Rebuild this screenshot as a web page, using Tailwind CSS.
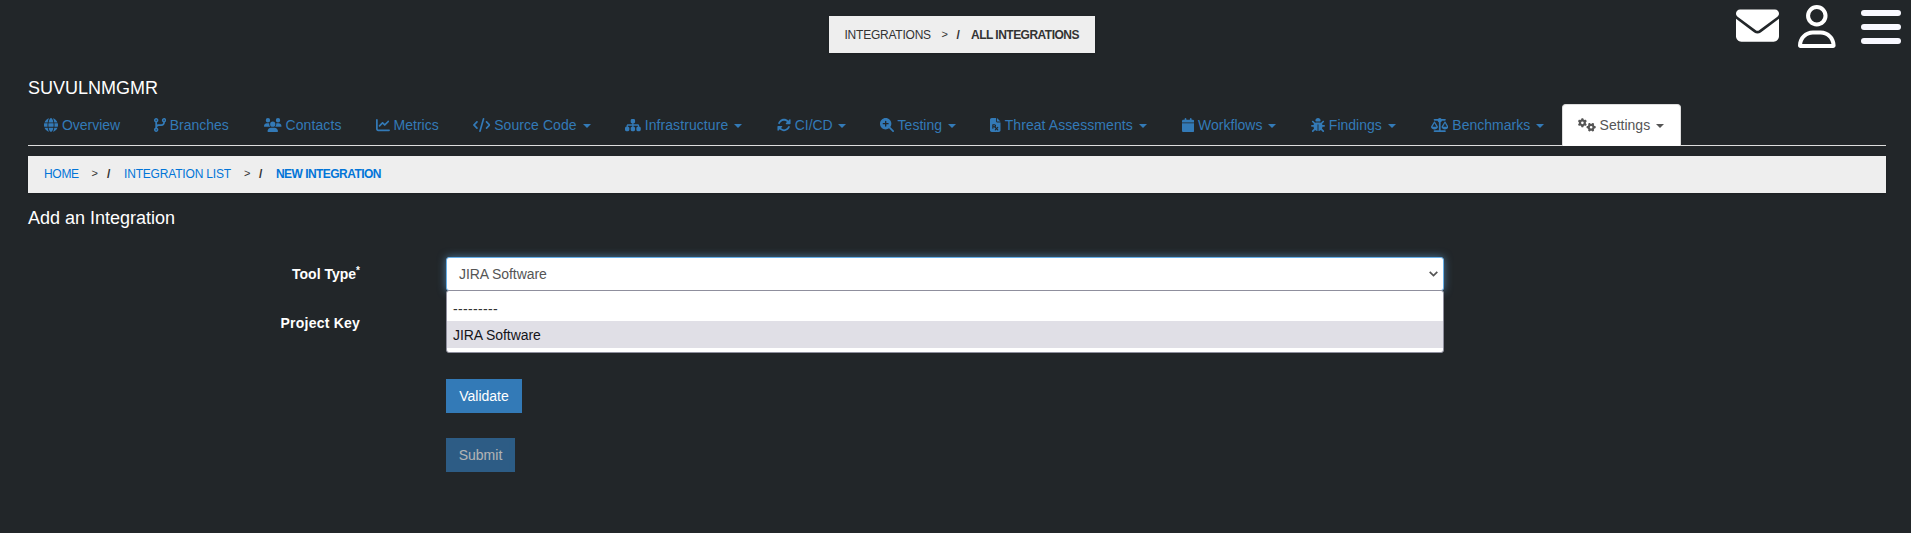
<!DOCTYPE html>
<html lang="en">
<head>
<meta charset="utf-8">
<title>Add an Integration</title>
<script src="https://cdn.jsdelivr.net/npm/@tailwindcss/browser@4"></script>
</head>
<body class="h-[533px] overflow-hidden bg-[#222629] font-['Liberation_Sans',Arial,sans-serif] text-sm leading-5 text-white">
<header class="flex h-[53px] items-start">
  <nav class="mt-4 ml-[829px] flex h-[37px] w-[266px] items-center whitespace-nowrap bg-[#eee] pl-[15.5px] text-xs text-[#333] shadow">
    <span class="w-[97px] tracking-[-0.23px]">INTEGRATIONS</span><span class="w-[15px] text-[11px]">&gt;</span><span class="w-[14.5px] font-bold">/</span><span class="font-bold tracking-[-0.52px]">ALL INTEGRATIONS</span>
  </nav>
  <div class="ml-auto flex pr-[10px]">
    <svg class="mt-[4.2px] h-[43px] w-[43px]" viewBox="0 0 512 512" fill="currentColor"><path d="M48 64C21.5 64 0 85.5 0 112c0 15.1 7.1 29.3 19.2 38.4L236.8 313.6c11.4 8.5 27 8.5 38.4 0L492.8 150.4c12.1-9.1 19.2-23.3 19.2-38.4c0-26.5-21.5-48-48-48H48zM0 176V384c0 35.3 28.7 64 64 64H448c35.3 0 64-28.7 64-64V176L294.4 339.2c-22.8 17.1-54 17.1-76.8 0L0 176z"/></svg>
    <svg class="mt-[4.7px] ml-[19px] h-[43px] w-[37.6px]" viewBox="0 0 448 512" fill="currentColor"><path d="M304 128a80 80 0 1 0 -160 0 80 80 0 1 0 160 0zM96 128a128 128 0 1 1 256 0A128 128 0 1 1 96 128zM49.3 464H398.7c-8.9-63.3-63.3-112-129-112H178.3c-65.7 0-120.1 48.7-129 112zM0 482.3C0 383.8 79.8 304 178.3 304h91.4C368.2 304 448 383.8 448 482.3c0 16.4-13.3 29.7-29.7 29.7H29.7C13.3 512 0 498.7 0 482.3z"/></svg>
    <div class="mt-[10px] ml-[25.4px] flex w-10 flex-col gap-2"><i class="h-[6px] rounded-full bg-[#f8f8ff]"></i><i class="h-[6px] rounded-full bg-[#f8f8ff]"></i><i class="h-[6px] rounded-full bg-[#f8f8ff]"></i></div>
  </div>
</header>
<main class="pr-[25px] pl-7">
  <h1 class="mt-[25px] h-[26px] text-lg leading-5">SUVULNMGMR</h1>
  <ul class="flex h-[42px] items-start gap-[2px] border-b border-[#ddd] whitespace-nowrap text-[#337ab7]">
    <li class="w-[107.5px] px-4 py-[11px]"><svg class="inline h-[14px] w-[14px] align-[-2px]" viewBox="0 0 512 512" fill="currentColor"><path d="M352 256c0 22.2-1.2 43.6-3.3 64H163.3c-2.2-20.4-3.3-41.8-3.3-64s1.2-43.6 3.3-64H348.7c2.2 20.4 3.3 41.8 3.3 64zm28.8-64H503.9c5.3 20.5 8.1 41.9 8.1 64s-2.8 43.5-8.1 64H380.8c2.1-20.6 3.2-42 3.2-64s-1.1-43.4-3.2-64zm112.6-32H376.7c-10-63.9-29.8-117.4-55.3-151.6c78.3 20.7 142 77.5 171.9 151.6zm-149.1 0H167.7c6.1-36.4 15.5-68.6 27-94.7c10.5-23.6 22.2-40.7 33.5-51.5C239.4 3.2 248.7 0 256 0s16.6 3.2 27.8 13.8c11.3 10.8 23 27.9 33.5 51.5c11.6 26 20.9 58.2 27 94.7zm-209 0H18.6C48.6 85.9 112.2 29.1 190.6 8.4C165.1 42.6 145.3 96.1 135.3 160zM8.1 192H131.2c-2.1 20.6-3.2 42-3.2 64s1.1 43.4 3.2 64H8.1C2.8 299.5 0 278.1 0 256s2.8-43.5 8.1-64zM194.7 446.6c-11.6-26-20.9-58.2-27-94.6H344.3c-6.1 36.4-15.5 68.6-27 94.6c-10.5 23.6-22.2 40.7-33.5 51.5C272.6 508.8 263.3 512 256 512s-16.6-3.2-27.8-13.8c-11.3-10.8-23-27.9-33.5-51.5zM135.3 352c10 63.9 29.8 117.4 55.3 151.6C112.2 482.9 48.6 426.1 18.6 352H135.3zm358.1 0c-30 74.1-93.6 130.9-171.9 151.6c25.5-34.2 45.2-87.7 55.3-151.6H493.4z"/></svg> Overview</li>
    <li class="w-[108.5px] px-4 py-[11px]"><svg class="inline h-[14px] w-[12.25px] align-[-2px]" viewBox="0 0 448 512" fill="currentColor"><path d="M80 104a24 24 0 1 0 0-48 24 24 0 1 0 0 48zm80-24c0 32.8-19.7 61-48 73.3v87.8c18.8-10.9 40.7-17.1 64-17.1h96c35.3 0 64-28.7 64-64v-6.7C307.7 141 288 112.8 288 80c0-44.2 35.8-80 80-80s80 35.8 80 80c0 32.8-19.7 61-48 73.3V160c0 70.7-57.3 128-128 128H176c-35.3 0-64 28.7-64 64v6.7c28.3 12.3 48 40.5 48 73.3c0 44.2-35.8 80-80 80s-80-35.8-80-80c0-32.8 19.7-61 48-73.3V352 153.3C19.7 141 0 112.8 0 80C0 35.8 35.8 0 80 0s80 35.8 80 80zm232 0a24 24 0 1 0 -48 0 24 24 0 1 0 48 0zM80 456a24 24 0 1 0 0-48 24 24 0 1 0 0 48z"/></svg> Branches</li>
    <li class="w-[109.7px] px-4 py-[11px] tracking-[0.1px]"><svg class="inline h-[14px] w-[17.5px] align-[-2px]" viewBox="0 0 640 512" fill="currentColor"><path d="M144 0a80 80 0 1 1 0 160A80 80 0 1 1 144 0zM512 0a80 80 0 1 1 0 160A80 80 0 1 1 512 0zM0 298.7C0 239.8 47.8 192 106.7 192h42.7c15.9 0 31 3.5 44.6 9.7c-1.3 7.2-1.9 14.7-1.9 22.3c0 38.2 16.8 72.5 43.3 96c-.2 0-.4 0-.7 0H21.3C9.6 320 0 310.4 0 298.7zM405.3 320c-.2 0-.4 0-.7 0c26.6-23.5 43.3-57.8 43.3-96c0-7.6-.7-15-1.9-22.3c13.6-6.3 28.7-9.7 44.6-9.7h42.7C592.2 192 640 239.8 640 298.7c0 11.8-9.6 21.3-21.3 21.3H405.3zM224 224a96 96 0 1 1 192 0 96 96 0 1 1 -192 0zM128 485.3C128 411.7 187.7 352 261.3 352H378.7C452.3 352 512 411.7 512 485.3c0 14.7-11.9 26.7-26.7 26.7H154.7c-14.7 0-26.7-11.9-26.7-26.7z"/></svg> Contacts</li>
    <li class="w-[95px] px-4 py-[11px]"><svg class="inline h-[14px] w-[14px] align-[-2px]" viewBox="0 0 512 512" fill="currentColor"><path d="M64 64c0-17.7-14.3-32-32-32S0 46.3 0 64V400c0 44.2 35.8 80 80 80H480c17.7 0 32-14.3 32-32s-14.3-32-32-32H80c-8.8 0-16-7.2-16-16V64zm406.6 86.6c12.5-12.5 12.5-32.8 0-45.3s-32.8-12.5-45.3 0L320 210.7l-57.4-57.4c-12.5-12.5-32.8-12.5-45.3 0l-112 112c-12.5 12.5-12.5 32.8 0 45.3s32.8 12.5 45.3 0L240 221.3l57.4 57.4c12.5 12.5 32.8 12.5 45.3 0l128-128z"/></svg> Metrics</li>
    <li class="w-[150.3px] px-4 py-[11px] tracking-[0.07px]"><svg class="inline h-[14px] w-[17.5px] align-[-2px]" viewBox="0 0 640 512" fill="currentColor"><path d="M392.8 1.2c-17-4.9-34.7 5-39.6 22l-128 448c-4.9 17 5 34.7 22 39.6s34.7-5 39.6-22l128-448c4.9-17-5-34.7-22-39.6zm80.6 120.1c-12.5 12.5-12.5 32.8 0 45.3L562.7 256l-89.4 89.4c-12.5 12.5-12.5 32.8 0 45.3s32.8 12.5 45.3 0l112-112c12.5-12.5 12.5-32.8 0-45.3l-112-112c-12.5-12.5-32.8-12.5-45.3 0zm-306.7 0c-12.5-12.5-32.8-12.5-45.3 0l-112 112c-12.5 12.5-12.5 32.8 0 45.3l112 112c12.5 12.5 32.8 12.5 45.3 0s12.5-32.8 0-45.3L77.3 256l89.4-89.4c12.5-12.5 12.5-32.8 0-45.3z"/></svg> Source Code <i class="ml-[2px] inline-block border-x-4 border-t-4 border-x-transparent align-middle"></i></li>
    <li class="w-[150px] px-4 py-[11px] tracking-[0.08px]"><svg class="inline h-[14px] w-[15.75px] align-[-2px]" viewBox="0 0 576 512" fill="currentColor"><path d="M208 80c0-26.5 21.5-48 48-48h64c26.5 0 48 21.5 48 48v64c0 26.5-21.5 48-48 48h-8v40H464c30.9 0 56 25.1 56 56v32h8c26.5 0 48 21.5 48 48v64c0 26.5-21.5 48-48 48H464c-26.5 0-48-21.5-48-48V368c0-26.5 21.5-48 48-48h8V288c0-4.4-3.6-8-8-8H312v40h8c26.5 0 48 21.5 48 48v64c0 26.5-21.5 48-48 48H256c-26.5 0-48-21.5-48-48V368c0-26.5 21.5-48 48-48h8V280H112c-4.4 0-8 3.6-8 8v32h8c26.5 0 48 21.5 48 48v64c0 26.5-21.5 48-48 48H48c-26.5 0-48-21.5-48-48V368c0-26.5 21.5-48 48-48h8V288c0-30.9 25.1-56 56-56H264V192h-8c-26.5 0-48-21.5-48-48V80z"/></svg> Infrastructure <i class="ml-[2px] inline-block border-x-4 border-t-4 border-x-transparent align-middle"></i></li>
    <li class="w-[101px] px-4 py-[11px] tracking-[-0.08px]"><svg class="inline h-[14px] w-[14px] align-[-2px]" viewBox="0 0 512 512" fill="currentColor"><path d="M142.9 142.9c62.2-62.2 162.7-62.5 225.3-1L327 183c-6.9 6.9-8.9 17.2-5.2 26.2s12.5 14.8 22.2 14.8H472c13.3 0 24-10.7 24-24V72c0-9.7-5.8-18.5-14.8-22.2s-19.3-1.7-26.2 5.2L413.4 96.6c-87.6-86.5-228.7-86.2-315.8 1C73.2 122 55.6 150.7 44.8 181.4c-5.9 16.7 2.9 34.9 19.5 40.8s34.9-2.9 40.8-19.5c7.7-21.8 20.2-42.3 37.8-59.8zM16 312V440c0 9.7 5.8 18.5 14.8 22.2s19.3 1.7 26.2-5.2l41.6-41.6c87.6 86.5 228.7 86.2 315.8-1c24.4-24.4 42.1-53.1 52.9-83.7c5.9-16.7-2.9-34.9-19.5-40.8s-34.9 2.9-40.8 19.5c-7.7 21.8-20.2 42.3-37.8 59.8c-62.2 62.2-162.7 62.5-225.3 1L185 329c6.9-6.9 8.9-17.2 5.2-26.2s-12.5-14.8-22.2-14.8H40c-13.3 0-24 10.7-24 24z"/></svg> CI/CD <i class="ml-[2px] inline-block border-x-4 border-t-4 border-x-transparent align-middle"></i></li>
    <li class="w-[108.5px] px-4 py-[11px]"><svg class="inline h-[14px] w-[14px] align-[-2px]" viewBox="0 0 512 512" fill="currentColor"><path d="M416 208c0 45.9-14.9 88.3-40 122.7L502.6 457.4c12.5 12.5 12.5 32.8 0 45.3s-32.8 12.5-45.3 0L330.7 376c-34.4 25.2-76.8 40-122.7 40C93.1 416 0 322.9 0 208S93.1 0 208 0S416 93.1 416 208zM184 296c0 13.3 10.7 24 24 24s24-10.7 24-24V232h64c13.3 0 24-10.7 24-24s-10.7-24-24-24H232V120c0-13.3-10.7-24-24-24s-24 10.7-24 24v64H120c-13.3 0-24 10.7-24 24s10.7 24 24 24h64v64z"/></svg> Testing <i class="ml-[2px] inline-block border-x-4 border-t-4 border-x-transparent align-middle"></i></li>
    <li class="w-[189.5px] px-4 py-[11px] tracking-[0.07px]"><svg class="inline h-[14px] w-[10.5px] align-[-2px]" viewBox="0 0 384 512" fill="currentColor"><path d="M64 0C28.7 0 0 28.7 0 64V448c0 35.3 28.7 64 64 64H320c35.3 0 64-28.7 64-64V160H256c-17.7 0-32-14.3-32-32V0H64zM256 0V128H384L256 0z"/><path class="stroke-[#222629]" fill="none" stroke-width="42" stroke-linecap="round" stroke-linejoin="round" d="M104 376V248h62a36 36 0 0 1 0 72H104M168 320L284 436M284 346L194 436"/></svg> Threat Assessments <i class="ml-[2px] inline-block border-x-4 border-t-4 border-x-transparent align-middle"></i></li>
    <li class="w-[127px] px-4 py-[11px]"><svg class="inline h-[14px] w-[12.25px] align-[-2px]" viewBox="0 0 448 512" fill="currentColor"><path d="M96 32V64H48C21.5 64 0 85.5 0 112v48H448V112c0-26.5-21.5-48-48-48H352V32c0-17.7-14.3-32-32-32s-32 14.3-32 32V64H160V32c0-17.7-14.3-32-32-32S96 14.3 96 32zM448 192H0V464c0 26.5 21.5 48 48 48H400c26.5 0 48-21.5 48-48V192z"/></svg> Workflows <i class="ml-[2px] inline-block border-x-4 border-t-4 border-x-transparent align-middle"></i></li>
    <li class="w-[118px] px-4 py-[11px]"><svg class="inline h-[14px] w-[14px] align-[-2px]" viewBox="0 0 512 512" fill="currentColor"><path d="M256 0c53 0 96 43 96 96v3.6c0 15.7-12.7 28.4-28.4 28.4H188.4c-15.7 0-28.4-12.7-28.4-28.4V96c0-53 43-96 96-96zM41.4 105.4c12.5-12.5 32.8-12.5 45.3 0l64 64c.7 .7 1.3 1.4 1.9 2.1c14.2-7.3 30.4-11.4 47.5-11.4H312c17.1 0 33.2 4.1 47.5 11.4c.6-.7 1.2-1.4 1.9-2.1l64-64c12.5-12.5 32.8-12.5 45.3 0s12.5 32.8 0 45.3l-64 64c-.7 .7-1.4 1.3-2.1 1.9c6.2 12 10.1 25.3 11.1 39.5H480c17.7 0 32 14.3 32 32s-14.3 32-32 32H416c0 24.6-5.5 47.8-15.4 68.6c2.2 1.3 4.2 2.9 6 4.8l64 64c12.5 12.5 12.5 32.8 0 45.3s-32.8 12.5-45.3 0l-63.1-63.1c-24.5 21.8-55.8 36.2-90.3 39.6V240c0-8.8-7.2-16-16-16s-16 7.2-16 16V479.2c-34.5-3.4-65.8-17.8-90.3-39.6L86.6 502.6c-12.5 12.5-32.8 12.5-45.3 0s-12.5-32.8 0-45.3l64-64c1.9-1.9 3.9-3.4 6-4.8C101.5 367.8 96 344.6 96 320H32c-17.7 0-32-14.3-32-32s14.3-32 32-32H96.3c1.1-14.1 5-27.5 11.1-39.5c-.7-.6-1.4-1.2-2.1-1.9l-64-64c-12.5-12.5-12.5-32.8 0-45.3z"/></svg> Findings <i class="ml-[2px] inline-block border-x-4 border-t-4 border-x-transparent align-middle"></i></li>
    <li class="w-[145.2px] px-4 py-[11px]"><svg class="inline h-[14px] w-[17.5px] align-[-2px]" viewBox="0 0 640 512" fill="currentColor"><path d="M384 32H512c17.7 0 32 14.3 32 32s-14.3 32-32 32H398.4c-5.2 25.8-22.9 47.1-46.4 57.3V448H512c17.7 0 32 14.3 32 32s-14.3 32-32 32H320 128c-17.7 0-32-14.3-32-32s14.3-32 32-32H288V153.3c-23.5-10.3-41.2-31.6-46.4-57.3H128c-17.7 0-32-14.3-32-32s14.3-32 32-32H256c14.6-19.4 37.8-32 64-32s49.4 12.6 64 32zm55.6 288H584.4L512 195.8 439.6 320zM512 416c-62.9 0-115.2-34-126-78.9c-2.6-11 1-22.3 6.7-32.1l95.2-163.2c5-8.6 14.2-13.8 24.1-13.8s19.1 5.3 24.1 13.8l95.2 163.2c5.7 9.8 9.3 21.1 6.7 32.1C627.2 382 574.9 416 512 416zM126.8 195.8L54.4 320H199.3L126.8 195.8zM.9 337.1c-2.6-11 1-22.3 6.7-32.1l95.2-163.2c5-8.6 14.2-13.8 24.1-13.8s19.1 5.3 24.1 13.8l95.2 163.2c5.7 9.8 9.3 21.1 6.7 32.1C242 382 189.7 416 126.8 416S11.7 382 .9 337.1z"/></svg> Benchmarks <i class="ml-[2px] inline-block border-x-4 border-t-4 border-x-transparent align-middle"></i></li>
    <li class="h-[42px] w-[119px] rounded-t border border-b-0 border-[#ddd] bg-white px-[15px] py-[10px] text-[#555]"><svg class="inline h-[14px] w-[17.5px] align-[-2px]" viewBox="0 0 640 512" fill="currentColor"><defs><path id="gear" d="M308.5 135.3c7.1-6.3 9.9-16.2 6.2-25c-2.3-5.3-4.8-10.5-7.6-15.5L304 89.4c-3-5-6.3-9.9-9.8-14.6c-5.7-7.6-15.7-10.1-24.7-7.1l-28.2 9.3c-10.7-8.8-23-16-36.2-20.9L199 27.1c-1.9-9.3-9.1-16.7-18.5-17.8C173.9 8.4 167.2 8 160.4 8h-.7c-6.8 0-13.5 .4-20.1 1.2c-9.4 1.1-16.6 8.6-18.5 17.8L115 56.1c-13.3 5-25.5 12.1-36.2 20.9L50.5 67.8c-9-3-19-.5-24.7 7.1c-3.5 4.7-6.8 9.6-9.9 14.6l-3 5.3c-2.8 5-5.3 10.2-7.6 15.6c-3.7 8.7-.9 18.6 6.2 25l22.2 19.8C32.6 161.9 32 168.9 32 176s.6 14.1 1.7 20.9L11.5 216.7c-7.1 6.3-9.9 16.2-6.2 25c2.3 5.3 4.8 10.5 7.6 15.6l3 5.2c3 5.1 6.3 9.9 9.9 14.6c5.7 7.6 15.7 10.1 24.7 7.1l28.2-9.3c10.7 8.8 23 16 36.2 20.9l6.1 29.1c1.9 9.3 9.1 16.7 18.5 17.8c6.7 .8 13.5 1.2 20.4 1.2s13.7-.4 20.4-1.2c9.4-1.1 16.6-8.6 18.5-17.8l6.1-29.1c13.3-5 25.5-12.1 36.2-20.9l28.2 9.3c9 3 19 .5 24.7-7.1c3.5-4.7 6.8-9.5 9.8-14.6l3.1-5.4c2.8-5 5.3-10.2 7.6-15.5c3.7-8.7 .9-18.6-6.2-25l-22.2-19.8c1.1-6.8 1.7-13.8 1.7-20.9s-.6-14.1-1.7-20.9l22.2-19.8zM112 176a48 48 0 1 1 96 0 48 48 0 1 1 -96 0z"/></defs><use href="#gear"/><use href="#gear" transform="translate(480 336) rotate(90) translate(-160 -176)"/></svg> Settings <i class="ml-[2px] inline-block border-x-4 border-t-4 border-x-transparent align-middle"></i></li>
  </ul>
  <nav class="mt-[10px] flex h-[37px] items-center whitespace-nowrap bg-[#eee] pb-[2px] pl-4 text-xs text-[#0275d8] shadow">
    <span class="w-[47.5px] tracking-[-0.3px]">HOME</span><span class="w-[15.5px] text-[11px] text-[#333]">&gt;</span><span class="w-[17px] font-bold text-[#333]">/</span><span class="w-[120px] tracking-[-0.18px]">INTEGRATION LIST</span><span class="w-[15px] text-[11px] text-[#333]">&gt;</span><span class="w-[17px] font-bold text-[#333]">/</span><span class="font-bold tracking-[-0.55px]">NEW INTEGRATION</span>
  </nav>
  <h2 class="mt-[15px] text-lg leading-5">Add an Integration</h2>
  <form class="mt-[29px]">
    <div class="flex h-[49px]">
      <label class="mr-[86px] w-[332px] pt-[7px] text-right font-bold">Tool Type<sup class="text-[10px] leading-none">*</sup></label>
      <div class="relative h-[34px] w-[998px]">
        <div class="flex h-[34px] items-center justify-between rounded-[3px] border border-[#66afe9] bg-white pr-[5px] pl-3 tracking-[-0.08px] text-[#555] shadow-[0_0_8px_rgba(102,175,233,0.6)]">JIRA Software
          <svg class="h-[6px] w-[9px]" viewBox="0 0 9 6" fill="none" stroke="currentColor" stroke-width="1.7"><path d="M.7 .8L4.5 4.6L8.3 .8"/></svg>
        </div>
        <div class="absolute top-[33px] left-0 h-[63px] w-full rounded-[3px] border border-[#8f8f9d] bg-white pt-[3px] text-[#333]">
          <div class="h-[27px] px-[6px] pt-[5px] tracking-[0.34px]">---------</div>
          <div class="h-[27px] bg-[#e0dfe6] px-[6px] pt-1 tracking-[-0.08px] text-[#15141a]">JIRA Software</div>
        </div>
      </div>
    </div>
    <div class="flex h-[73px]"><label class="w-[332px] pt-[7px] text-right font-bold tracking-[0.22px]">Project Key</label></div>
    <div class="flex flex-col items-start gap-[25px] pl-[418px]">
      <button type="button" class="h-[34px] w-[76px] bg-[#337ab7]">Validate</button>
      <button type="button" disabled class="h-[34px] w-[69px] bg-[#337ab7] opacity-65">Submit</button>
    </div>
  </form>
</main>
</body>
</html>
